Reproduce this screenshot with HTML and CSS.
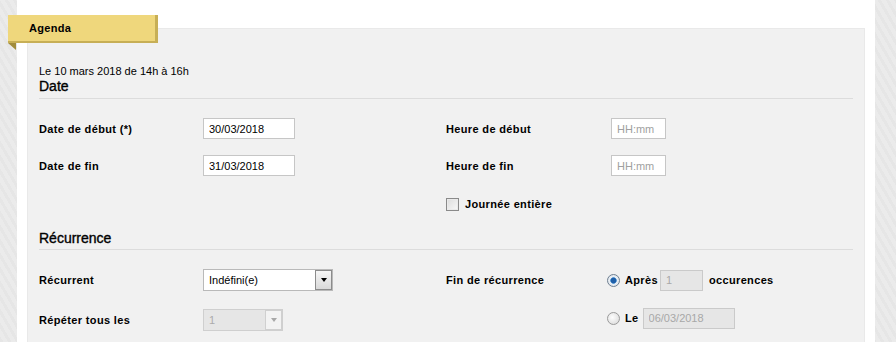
FILE: index.html
```html
<!DOCTYPE html>
<html lang="fr">
<head>
<meta charset="utf-8">
<title>Agenda</title>
<link rel="stylesheet" href="styles.css">
</head>
<body>
<div class="page">
  <div class="tab"><span class="tab-label">Agenda</span><span class="tab-fold"></span></div>
  <div class="panel">
    <div class="summary">Le 10 mars 2018 de 14h à 16h</div>
    <h2 class="section-title">Date</h2>
    <div class="grid grid-date">
      <label class="lbl">Date de début (*)</label>
      <div class="field"><input class="txt date" type="text" value="30/03/2018"></div>
      <label class="lbl">Heure de début</label>
      <div class="field"><input class="txt time" type="text" placeholder="HH:mm"></div>

      <label class="lbl">Date de fin</label>
      <div class="field"><input class="txt date" type="text" value="31/03/2018"></div>
      <label class="lbl">Heure de fin</label>
      <div class="field"><input class="txt time" type="text" placeholder="HH:mm"></div>

      <div></div><div></div>
      <div class="check-row"><span class="checkbox"></span><span class="lbl">Journée entière</span></div>
      <div></div>
    </div>

    <h2 class="section-title title-rec">Récurrence</h2>
    <div class="grid grid-rec">
      <label class="lbl">Récurrent</label>
      <div class="field"><div class="select"><span class="select-text">Indéfini(e)</span><span class="select-arrow"><span class="tri"></span></span></div></div>
      <label class="lbl">Fin de récurrence</label>
      <div class="field radio-row"><span class="radio checked"></span><span class="lbl">Après</span><input class="txt disabled count" type="text" value="1" disabled><span class="lbl">occurences</span></div>

      <label class="lbl">Répéter tous les</label>
      <div class="field"><div class="select select-disabled"><span class="select-text">1</span><span class="select-arrow"><span class="tri"></span></span></div></div>
      <div></div>
      <div class="field radio-row row-le"><span class="radio"></span><span class="lbl">Le</span><input class="txt disabled date" type="text" value="06/03/2018" disabled></div>
    </div>
  </div>
</div>
</body>
</html>
```
FILE: styles.css
```css
* { box-sizing: border-box; }
html, body { margin: 0; padding: 0; }
body {
  width: 896px;
  height: 342px;
  overflow: hidden;
  font-family: "Liberation Sans", Arial, sans-serif;
  font-size: 11px;
  color: #000;
  background: repeating-linear-gradient(60deg, #e6e6e6 0 3px, #ebebeb 3px 7px);
}
.page {
  position: relative;
  margin-left: 17px;
  width: 858px;
  height: 342px;
  background: #fff;
  padding-top: 28px;
}
.tab {
  position: absolute;
  left: -9px;
  top: 15px;
  width: 150px;
  height: 28px;
  background: #c7af56;
  z-index: 2;
}
.tab-label {
  display: block;
  width: 147px;
  height: 26px;
  background: #efd77c;
  font-weight: bold;
  letter-spacing: 0.3px;
  padding-left: 21px;
  line-height: 26px;
}
.tab-fold {
  position: absolute;
  left: 0;
  top: 28px;
  width: 0;
  height: 0;
  border-top: 7px solid #a18c3c;
  border-left: 8px solid transparent;
}
.panel {
  margin-left: 10px;
  width: 838px;
  height: 314px;
  background: #f1f1f1;
  border: 1px solid #e9e9e9;
  border-bottom: none;
  padding: 35px 11px 0 11px;
}
.summary { line-height: 14px; }
.section-title {
  margin: 0;
  font-size: 14px;
  font-weight: normal;
  line-height: 16px;
  padding-bottom: 4px;
  border-bottom: 1px solid #dcdcdc;
  color: #000;
  -webkit-text-stroke: 0.35px #000;
}
.title-rec { margin-top: 17px; padding-bottom: 3px; }
.grid {
  display: grid;
  grid-template-columns: 164px 243px 161px 1fr;
  row-gap: 16px;
  margin-top: 19px;
}
.grid-date { grid-auto-rows: 21px; }
.grid-rec { grid-template-rows: 22px 22px; row-gap: 18px; margin-top: 19px; }
.lbl { font-weight: bold; letter-spacing: 0.35px; display: flex; align-items: center; }
.field { display: flex; align-items: center; }
.txt {
  font-family: "Liberation Sans", Arial, sans-serif;
  font-size: 11px;
  height: 21px;
  border: 1px solid #c6c6c6;
  background: #fff;
  padding: 0 0 0 5px;
  margin: 0;
  color: #000;
  outline: none;
}
.txt.date { width: 92px; }
.txt.time { width: 55px; margin-left: 4px; }
.txt::placeholder { color: #a0a0a0; }
.txt.disabled { background: #e6e6e6; border-color: #cacaca; color: #a8a8a8; }
.txt.count { width: 43px; height: 21px; margin: 0 1px 0 2px; }
.check-row { display: flex; align-items: center; gap: 6px; padding-top: 3px; }
.checkbox {
  width: 13px;
  height: 13px;
  border: 1px solid #8a8a8a;
  background: linear-gradient(135deg, #dcdcdc, #f8f8f8);
  box-shadow: inset 0 0 0 1px #eaeaea;
}
.select {
  display: flex;
  width: 130px;
  height: 22px;
  border: 1px solid #b9b9b9;
  background: #fff;
  align-items: center;
}
.select-text { flex: 1; padding-left: 5px; }
.select-arrow {
  width: 17px;
  height: 20px;
  border: 1px solid #8c8c8c;
  background: linear-gradient(#f6f6f6, #d9d9d9);
  display: flex;
  align-items: center;
  justify-content: center;
}
.tri {
  width: 0; height: 0;
  border-left: 3.5px solid transparent;
  border-right: 3.5px solid transparent;
  border-top: 4px solid #000;
}
.select-disabled { width: 80px; background: #e6e6e6; border-color: #cfcfcf; color: #ababab; }
.select-disabled .select-arrow { border-color: #d0d0d0; background: #f3f3f3; }
.select-disabled .tri { border-top-color: #a8a8a8; }
.radio-row { gap: 0; }
.radio-row .lbl { margin-left: 5px; }
.radio {
  width: 13px;
  height: 13px;
  border-radius: 50%;
  border: 1px solid #9a9a9a;
  background: radial-gradient(circle at 40% 40%, #fdfdfd, #d6d6d6);
}
.radio.checked {
  border-color: #6f7f90;
  background: radial-gradient(circle, #1f5fa8 0 2.5px, #5b9ad6 3px, #e8eef4 3.6px, #dfe4ea 100%);
}
.row-le { margin-top: -4px; }
.row-le .txt.date { margin-left: 4px; height: 21px; }
```
